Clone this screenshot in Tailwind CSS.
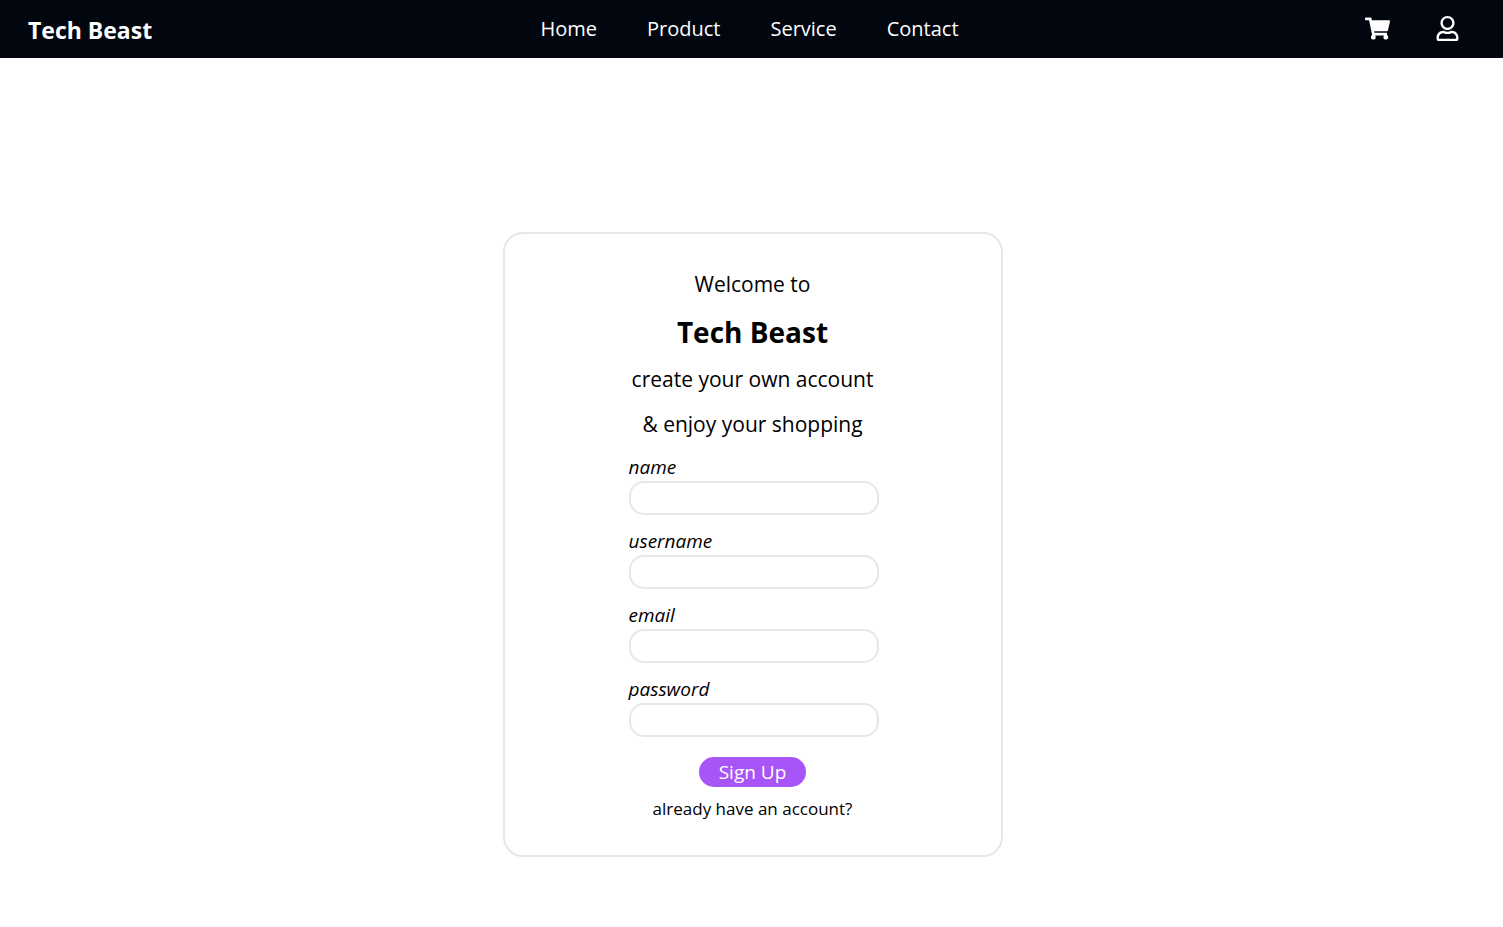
<!DOCTYPE html>
<html lang="en">
<head>
<meta charset="utf-8">
<meta name="viewport" content="width=device-width, initial-scale=1">
<title>Tech Beast</title>
<script src="https://cdn.jsdelivr.net/npm/@tailwindcss/browser@4"></script>
</head>
<body class="min-h-screen bg-white font-['Segoe_UI','Open_Sans','Noto_Sans',sans-serif] text-black">
<header class="grid h-[58px] grid-cols-[1fr_auto_1fr] items-center bg-[#02060f] pr-8 pl-7 text-white">
  <a href="#" class="justify-self-start pt-[2px] text-[23px] leading-8 font-bold">Tech Beast</a>
  <nav class="flex gap-[50px] text-[20px] leading-8">
    <a href="#">Home</a>
    <a href="#">Product</a>
    <a href="#">Service</a>
    <a href="#">Contact</a>
  </nav>
  <div class="flex items-center gap-[45px] justify-self-end pr-[11px] pb-[2px]">
    <a href="#" aria-label="Cart">
      <svg class="size-[25px]" viewBox="0 0 576 512" fill="currentColor"><path d="M528.12 301.319l47.273-208C578.806 78.301 567.391 64 551.99 64H159.208l-9.166-44.81C147.758 8.021 137.93 0 126.529 0H24C10.745 0 0 10.745 0 24v16c0 13.255 10.745 24 24 24h69.883l70.248 343.435C147.325 417.1 136 435.222 136 456c0 30.928 25.072 56 56 56s56-25.072 56-56c0-15.674-6.447-29.835-16.824-40h209.647C430.447 426.165 424 440.326 424 456c0 30.928 25.072 56 56 56s56-25.072 56-56c0-22.172-12.888-41.332-31.579-50.405l5.517-24.276c3.413-15.018-8.002-29.319-23.403-29.319H218.117l-6.545-32h293.145c11.206 0 20.92-7.754 23.403-18.681z"/></svg>
    </a>
    <a href="#" aria-label="Account">
      <svg class="size-[25px]" viewBox="0 0 448 512" fill="currentColor"><path d="M313.6 304c-28.7 0-42.5 16-89.6 16-47.1 0-60.8-16-89.6-16C60.2 304 0 364.2 0 438.4V464c0 26.5 21.5 48 48 48h352c26.5 0 48-21.5 48-48v-25.6c0-74.2-60.2-134.4-134.4-134.4zM400 464H48v-25.6c0-47.6 38.8-86.4 86.4-86.4 14.6 0 38.3 16 89.6 16 51.7 0 74.9-16 89.6-16 47.6 0 86.4 38.8 86.4 86.4V464zM224 288c79.5 0 144-64.5 144-144S303.5 0 224 0 80 64.500 80 144s64.500 144 144 144zm0-240c52.900 0 96 43.100 96 96s-43.100 96-96 96-96-43.100-96-96 43.100-96 96-96z"/></svg>
    </a>
  </div>
</header>
<main class="flex justify-center pt-[174px] pr-4 pb-[70px] pl-[18px]">
  <form class="flex w-full max-w-[500px] flex-col items-center rounded-[20px] border-2 border-gray-200 py-8">
    <p class="text-[21px] leading-9">Welcome to</p>
    <h1 class="mt-2 mb-[7px] text-[28px] leading-[44px] font-bold">Tech Beast</h1>
    <p class="text-[21px] leading-9">create your own account</p>
    <p class="mt-[9px] text-[21px] leading-9">&amp; enjoy your shopping</p>
    <div class="mt-3 ml-[2px] flex w-[250px] flex-col gap-[13px] text-[19px] leading-[27px]">
      <div class="flex flex-col">
        <label for="name" class="italic">name</label>
        <input id="name" type="text" class="h-[34px] rounded-[15px] border-2 border-gray-200 px-3">
      </div>
      <div class="flex flex-col">
        <label for="username" class="italic">username</label>
        <input id="username" type="text" class="h-[34px] rounded-[15px] border-2 border-gray-200 px-3">
      </div>
      <div class="flex flex-col">
        <label for="email" class="italic">email</label>
        <input id="email" type="email" class="h-[34px] rounded-[15px] border-2 border-gray-200 px-3">
      </div>
      <div class="flex flex-col">
        <label for="password" class="italic">password</label>
        <input id="password" type="password" class="h-[34px] rounded-[15px] border-2 border-gray-200 px-3">
      </div>
    </div>
    <button type="button" class="mt-5 h-[30px] rounded-[15px] bg-[#a855f7] px-5 pt-px text-[19px] leading-[29px] text-white">Sign Up</button>
    <a href="#" class="mt-2 text-[17px] leading-7">already have an account?</a>
  </form>
</main>
</body>
</html>
